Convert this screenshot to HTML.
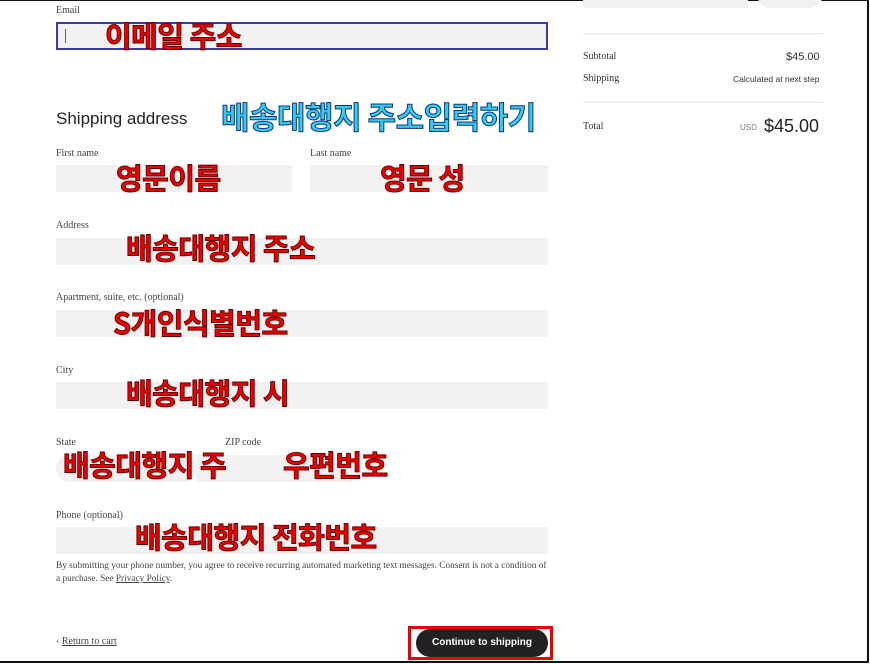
<!DOCTYPE html>
<html><head><meta charset="utf-8"><style>
*{margin:0;padding:0;box-sizing:border-box}
body{width:870px;height:664px;background:#fff;position:relative;overflow:hidden;font-family:"Liberation Serif",serif;color:#333}
.frame{position:absolute;left:0;top:0;width:869px;height:663px;border-top:1px solid #111;border-right:2px solid #111;border-bottom:2px solid #111}
.a{position:absolute}
.lbl{position:absolute;font-size:10px;color:#444;font-family:"Liberation Serif",serif}
.in{position:absolute;background:#f1f1f1}
.k{position:absolute;font-family:"Noto Sans CJK KR","NanumGothic",sans-serif;font-weight:700;color:#ee0000;font-size:29px;line-height:1;white-space:nowrap;-webkit-text-stroke:1px #600;letter-spacing:-0.5px}
.c{color:#33ccee;-webkit-text-stroke:1px #137}
.line{position:absolute;left:583px;width:240px;height:2px;background:#eee}
.r{position:absolute;font-size:10px;color:#333}
</style></head><body>
<div class="frame"></div>
<div class="lbl" style="left:56px;top:5px">Email</div>
<div class="in" style="left:56px;top:22px;width:492px;height:28px;border:2px solid #3a3aa0"></div>
<div class="a" style="left:65px;top:29px;width:1px;height:14px;background:#666"></div>
<div class="k" style="left:105px;top:21px">이메일 주소</div>

<div class="a" style="left:56px;top:109px;font-family:'Liberation Sans',sans-serif;font-size:17px;color:#222">Shipping address</div>
<div class="k c" style="left:221px;top:100px;font-size:31px">배송대행지 주소입력하기</div>

<div class="lbl" style="left:56px;top:148px">First name</div>
<div class="lbl" style="left:310px;top:148px">Last name</div>
<div class="in" style="left:56px;top:165px;width:236px;height:27px"></div>
<div class="in" style="left:310px;top:165px;width:238px;height:27px"></div>
<div class="k" style="left:116px;top:163px">영문이름</div>
<div class="k" style="left:380px;top:163px">영문 성</div>

<div class="lbl" style="left:56px;top:220px">Address</div>
<div class="in" style="left:56px;top:238px;width:492px;height:27px"></div>
<div class="k" style="left:126px;top:233px">배송대행지 주소</div>

<div class="lbl" style="left:56px;top:292px">Apartment, suite, etc. (optional)</div>
<div class="in" style="left:56px;top:310px;width:492px;height:27px"></div>
<div class="k" style="left:113px;top:308px">S개인식별번호</div>

<div class="lbl" style="left:56px;top:365px">City</div>
<div class="in" style="left:56px;top:382px;width:492px;height:27px"></div>
<div class="k" style="left:126px;top:378px">배송대행지 시</div>

<div class="lbl" style="left:56px;top:437px">State</div>
<div class="lbl" style="left:225px;top:437px">ZIP code</div>
<div class="in" style="left:56px;top:455px;width:140px;height:27px;border-radius:14px"></div>
<div class="in" style="left:196px;top:455px;width:156px;height:27px"></div>
<div class="k" style="left:63px;top:450px">배송대행지 주</div>
<div class="k" style="left:283px;top:450px">우편번호</div>

<div class="lbl" style="left:56px;top:510px">Phone (optional)</div>
<div class="in" style="left:56px;top:527px;width:492px;height:27px"></div>
<div class="k" style="left:135px;top:522px">배송대행지 전화번호</div>

<div class="a" style="left:56px;top:560px;font-size:9.3px;line-height:13px;color:#444;width:495px">By submitting your phone number, you agree to receive recurring automated marketing text messages. Consent is not a condition of a purchase. See <u>Privacy Policy</u>.</div>

<div class="a" style="left:56px;top:636px;font-size:10px;color:#444"><span style="color:#4466cc">‹</span> <u>Return to cart</u></div>
<div class="a" style="left:408px;top:626px;width:145px;height:34px;border:3px solid #ee0000"></div>
<div class="a" style="left:416px;top:629px;width:132px;height:28px;background:#222;border-radius:14px;color:#fff;font-family:'Liberation Sans',sans-serif;font-size:10px;font-weight:700;text-align:center;line-height:28px">Continue to shipping</div>

<div class="in" style="left:583px;top:0;width:165px;height:8px"></div>
<div class="in" style="left:757px;top:-20px;width:66px;height:28px;border-radius:14px"></div>
<div class="line" style="top:33px"></div>
<div class="r" style="left:583px;top:51px">Subtotal</div>
<div class="r" style="left:786px;top:51px;font-family:'Liberation Sans',sans-serif;font-size:11px">$45.00</div>
<div class="r" style="left:583px;top:73px">Shipping</div>
<div class="r" style="left:733px;top:74px;font-family:'Liberation Sans',sans-serif;font-size:8.5px">Calculated at next step</div>
<div class="line" style="top:101px"></div>
<div class="r" style="left:583px;top:121px">Total</div>
<div class="r" style="left:740px;top:123px;font-family:'Liberation Sans',sans-serif;font-size:8px;color:#777">USD</div>
<div class="r" style="left:764px;top:116px;font-family:'Liberation Sans',sans-serif;font-size:18px;color:#222">$45.00</div>
</body></html>
